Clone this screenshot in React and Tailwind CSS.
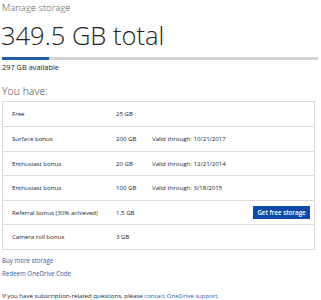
export default function App() {
  const rows = [
    { label: "Free", amount: "25 GB", valid: "", h: "h-[25px]" },
    { label: "Surface bonus", amount: "200 GB", valid: "Valid through: 10/21/2017", h: "h-[25px]" },
    { label: "Enthusiast bonus", amount: "20 GB", valid: "Valid through: 12/21/2014", h: "h-[24px]" },
    { label: "Enthusiast bonus", amount: "100 GB", valid: "Valid through: 3/18/2015", h: "h-[25px]" },
    { label: "Referral bonus (30% achieved)", amount: "1.5 GB", valid: "", button: true, h: "h-[24px]" },
    { label: "Camera roll bonus", amount: "3 GB", valid: "", h: "h-[24px]" },
  ];
  return (
    <div
      className="w-[321px] h-[300px] overflow-hidden bg-white text-[#222]"
      style={{ fontFamily: '"Open Sans", "Noto Sans", sans-serif' }}
    >
      <div className="pl-[2px] pt-[2px] text-[9.5px] leading-[12px] text-[#555] font-light">Manage storage</div>
      <div className="pl-[1px] mt-[7px] text-[25.5px] leading-[28px] font-light text-[#222]">349.5 GB total</div>
      <div className="mt-[8px] mx-[2px] w-[316px] h-[3px] bg-[#d4d4d4] flex">
        <div className="w-[47px] h-full bg-[#1e5bb0]"></div>
      </div>
      <div className="pl-[2px] mt-[3px] text-[7.4px] leading-[9px] text-[#222]">297 GB available</div>
      <div className="pl-[2px] mt-[13px] text-[10.5px] leading-[13px] font-light text-[#444]">You have:</div>
      <div className="mt-[3px] ml-[2px] w-[313px] border border-[#dcdcdc]">
        {rows.map((r, i) => (
          <div
            key={i}
            className={`${r.h} flex items-center text-[6.1px] text-[#222] ${i < rows.length - 1 ? "border-b border-[#dcdcdc]" : ""}`}
          >
            <div className="pl-[9px] w-[113px]">{r.label}</div>
            <div className="w-[36px]">{r.amount}</div>
            <div className="flex-1">{r.valid}</div>
            {r.button && (
              <div className="mr-[4px] w-[57px] h-[13px] bg-[#0f4aab] text-white text-[6.2px] font-semibold flex items-center justify-center">
                Get free storage
              </div>
            )}
          </div>
        ))}
      </div>
      <div className="pl-[2px] mt-[6px] text-[6.2px] leading-[9px] text-[#1f5ea8]">Buy more storage</div>
      <div className="pl-[2px] mt-[4px] text-[6.2px] leading-[9px] text-[#1f5ea8]">Redeem OneDrive Code</div>
      <div className="pl-[2px] mt-[13px] text-[6.1px] leading-[9px] text-[#222]">
        If you have subscription-related questions, please <span className="text-[#1f5ea8]">contact OneDrive support.</span>
      </div>
    </div>
  );
}
